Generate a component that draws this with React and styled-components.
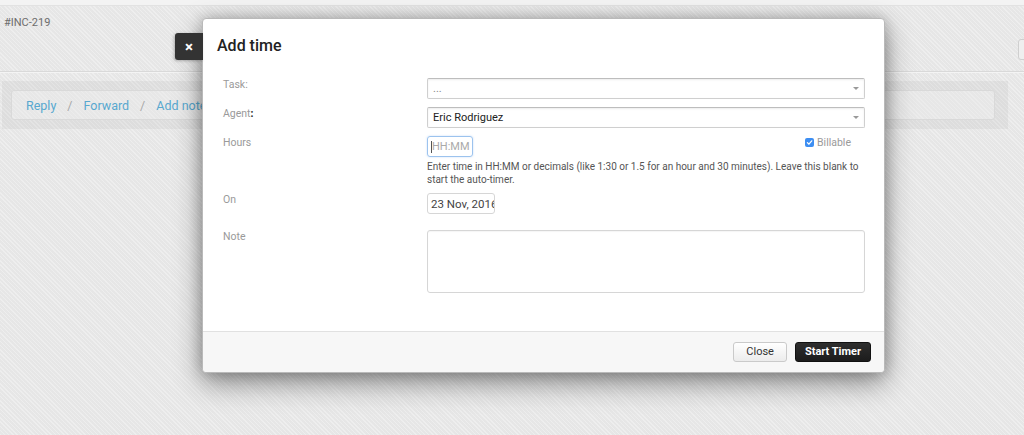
import React from "react";
import styled, { createGlobalStyle } from "styled-components";

const Global = createGlobalStyle`
  html, body { margin: 0; padding: 0; }
  body {
    font-family: Roboto, "Helvetica Neue", Arial, sans-serif;
    background: #e7e7e7;
    overflow: hidden;
  }
  * { box-sizing: border-box; }
`;

const pattern = `
  background-color: #e9e9e9;
  background-image: repeating-linear-gradient(
    45deg,
    rgba(255,255,255,0.22) 0px,
    rgba(255,255,255,0.22) 1px,
    rgba(0,0,0,0.012) 1px,
    rgba(0,0,0,0.012) 3px
  );
`;

const Page = styled.div`
  position: relative;
  width: 1024px;
  height: 435px;
  ${pattern}
`;

const TopStrip = styled.div`
  height: 6px;
  background: #f3f3f3;
  border-bottom: 1px solid #e2e2e2;
`;

const Header = styled.div`
  position: relative;
  height: 66px;
  padding: 10px 4px 0;
  border-bottom: 1px solid #d9d9d9;
  box-shadow: 0 1px 0 #f4f4f4;
`;

const TicketId = styled.div`
  font-size: 11px;
  color: #6d6d6d;
`;

const EdgeButton = styled.div`
  position: absolute;
  right: -10px;
  top: 33px;
  width: 16px;
  height: 21px;
  border: 1px solid #cfcfcf;
  border-radius: 3px;
  background: #efefef;
`;

const ToolbarWell = styled.div`
  margin: 9px 16px 0 2px;
  padding: 9px 13px 9px 9px;
  background: rgba(0, 0, 0, 0.04);
`;

const Toolbar = styled.div`
  display: flex;
  align-items: center;
  gap: 11px;
  height: 30px;
  padding: 0 14px;
  background: rgba(255, 255, 255, 0.3);
  border: 1px solid #d9d9d9;
  border-radius: 3px;
  font-size: 12.5px;
`;

const ToolLink = styled.span`
  color: #58a8cf;
`;

const Sep = styled.span`
  color: #a9a9a9;
`;

const Modal = styled.div`
  position: absolute;
  left: 202px;
  top: 18px;
  width: 683px;
  height: 355px;
  background: #fff;
  border: 1px solid #b9b9b9;
  border-radius: 4px;
  box-shadow: 0 10px 28px rgba(0, 0, 0, 0.42), 0 0 14px rgba(0, 0, 0, 0.2);
  display: flex;
  flex-direction: column;
`;

const Dismiss = styled.div`
  position: absolute;
  left: -28px;
  top: 14px;
  width: 28px;
  height: 27px;
  background: #333;
  border-radius: 3px 0 0 3px;
  color: #fff;
  font-size: 15px;
  font-weight: 700;
  display: flex;
  align-items: center;
  justify-content: center;
  box-shadow: -1px 1px 3px rgba(0,0,0,0.25);
`;

const Title = styled.h2`
  margin: 0;
  padding: 17px 14px 0;
  height: 58px;
  font-size: 16px;
  font-weight: 500;
  color: #222;
`;

const Body = styled.div`
  flex: 1;
  padding: 1px 19px 0 19px;
`;

const Row = styled.div`
  display: grid;
  grid-template-columns: 205px 1fr;
  margin-bottom: ${(p) => p.$gap ?? 8}px;
`;

const Label = styled.div`
  font-size: 10.5px;
  color: #9a9a9a;
  padding: 0 0 0 1px;
`;

const Field = styled.div`
  display: flex;
  flex-direction: column;
`;

const Select = styled.div`
  position: relative;
  height: 21px;
  border: 1px solid #cfcfcf;
  border-top-color: #bdbdbd;
  border-radius: 2px;
  box-shadow: inset 0 1px 2px rgba(0, 0, 0, 0.08);
  display: flex;
  align-items: center;
  padding: 0 5px;
  font-size: 11px;
  color: ${(p) => (p.$muted ? "#888" : "#222")};
  &::after {
    content: "";
    position: absolute;
    right: 5px;
    top: 8px;
    border-left: 3px solid transparent;
    border-right: 3px solid transparent;
    border-top: 3px solid #999;
  }
`;

const HoursLine = styled.div`
  display: flex;
  justify-content: space-between;
  align-items: flex-start;
`;

const Input = styled.div`
  width: ${(p) => p.$w}px;
  height: 21px;
  border: 1px solid ${(p) => (p.$focus ? "#9cc3ee" : "#d6d6d6")};
  border-radius: 3px;
  box-shadow: ${(p) => (p.$focus ? "0 0 2px rgba(80,150,230,0.35)" : "none")};
  padding: 0 2px 0 3px;
  display: flex;
  align-items: center;
  font-size: ${(p) => (p.$focus ? 11 : 11.5)}px;
  color: ${(p) => (p.$focus ? "#aaa" : "#444")};
  white-space: nowrap;
  overflow: hidden;
`;

const Caret = styled.span`
  display: inline-block;
  width: 1px;
  height: 12px;
  background: #555;
`;

const Billable = styled.label`
  display: flex;
  align-items: center;
  gap: 3px;
  font-size: 10.5px;
  color: #9a9a9a;
  margin: 0 14px 0 0;
`;

const Check = styled.span`
  width: 9px;
  height: 9px;
  border-radius: 2px;
  background: #3d8ef2;
  display: inline-flex;
  align-items: center;
  justify-content: center;
`;

const Help = styled.div`
  font-size: 10px;
  line-height: 13px;
  color: #555;
  margin-top: 3px;
  white-space: nowrap;
`;

const TextArea = styled.div`
  height: 63px;
  border: 1px solid #d6d6d6;
  border-radius: 3px;
  box-shadow: inset 0 1px 1px rgba(0,0,0,0.04);
`;

const Footer = styled.div`
  height: 41px;
  border-top: 1px solid #e1e1e1;
  background: #f7f7f7;
  border-radius: 0 0 4px 4px;
  display: flex;
  align-items: center;
  justify-content: flex-end;
  gap: 8px;
  padding: 0 13px 1px 0;
`;

const Button = styled.button`
  height: 20px;
  padding: 0 ${(p) => (p.$dark ? 9 : 12)}px;
  border-radius: 3px;
  font-family: inherit;
  font-size: 11px;
  font-weight: ${(p) => (p.$dark ? 700 : 400)};
  color: ${(p) => (p.$dark ? "#fff" : "#333")};
  background: ${(p) =>
    p.$dark ? "linear-gradient(#2e2e2e, #1c1c1c)" : "linear-gradient(#fff, #ececec)"};
  border: 1px solid ${(p) => (p.$dark ? "#111" : "#cacaca")};
  cursor: pointer;
`;

export default function App() {
  return (
    <>
      <Global />
      <Page>
        <TopStrip />
        <Header>
          <TicketId>#INC-219</TicketId>
          <EdgeButton />
        </Header>
        <ToolbarWell>
          <Toolbar>
            <ToolLink>Reply</ToolLink>
            <Sep>/</Sep>
            <ToolLink>Forward</ToolLink>
            <Sep>/</Sep>
            <ToolLink>Add note</ToolLink>
          </Toolbar>
        </ToolbarWell>

        <Modal>
          <Dismiss>×</Dismiss>
          <Title>Add time</Title>
          <Body>
            <Row>
              <Label>Task:</Label>
              <Field>
                <Select $muted>...</Select>
              </Field>
            </Row>
            <Row>
              <Label>
                Agent<b style={{ color: "#222" }}>:</b>
              </Label>
              <Field>
                <Select>Eric Rodriguez</Select>
              </Field>
            </Row>
            <Row $gap={7}>
              <Label>Hours</Label>
              <Field>
                <HoursLine>
                  <Input $w={46} $focus>
                    <Caret />
                    HH:MM
                  </Input>
                  <Billable>
                    <Check>
                      <svg width="7" height="7" viewBox="0 0 10 10">
                        <path d="M2 5.2 L4.2 7.4 L8.2 2.6" fill="none" stroke="#fff" strokeWidth="1.8" strokeLinecap="round" strokeLinejoin="round" />
                      </svg>
                    </Check>
                    Billable
                  </Billable>
                </HoursLine>
                <Help>
                  Enter time in HH:MM or decimals (like 1:30 or 1.5 for an hour and 30 minutes). Leave this blank to
                  <br />
                  start the auto-timer.
                </Help>
              </Field>
            </Row>
            <Row $gap={16}>
              <Label>On</Label>
              <Field>
                <Input $w={68}>23 Nov, 2016</Input>
              </Field>
            </Row>
            <Row>
              <Label>Note</Label>
              <Field>
                <TextArea />
              </Field>
            </Row>
          </Body>
          <Footer>
            <Button>Close</Button>
            <Button $dark>Start Timer</Button>
          </Footer>
        </Modal>
      </Page>
    </>
  );
}
